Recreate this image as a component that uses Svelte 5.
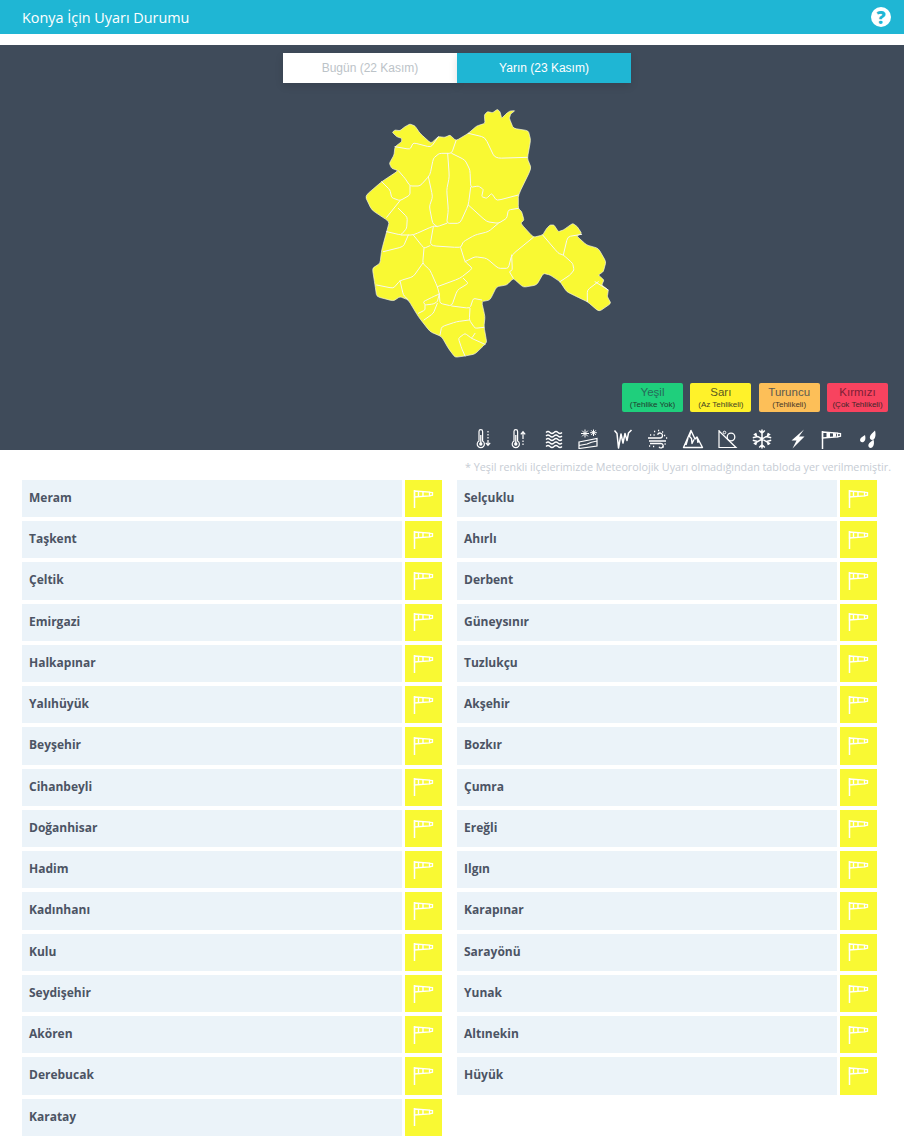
<script>
  const left = ["Meram","Taşkent","Çeltik","Emirgazi","Halkapınar","Yalıhüyük","Beyşehir","Cihanbeyli","Doğanhisar","Hadim","Kadınhanı","Kulu","Seydişehir","Akören","Derebucak","Karatay"]
  const right = ["Selçuklu","Ahırlı","Derbent","Güneysınır","Tuzlukçu","Akşehir","Bozkır","Çumra","Ereğli","Ilgın","Karapınar","Sarayönü","Yunak","Altınekin","Hüyük"]
  const legend = [
    {name: "Yeşil", sub: "(Tehlike Yok)", cls: "green"},
    {name: "Sarı", sub: "(Az Tehlikeli)", cls: "yellow"},
    {name: "Turuncu", sub: "(Tehlikeli)", cls: "orange"},
    {name: "Kırmızı", sub: "(Çok Tehlikeli)", cls: "red"}
  ]

  const outline = "45,288 95,245 145,212 125,205 118,190 132,165 135,140 155,125 155,115 140,110 127,97 135,90 150,92 165,80 180,72 195,78 210,100 243,130 265,110 285,112 300,105 318,122 355,100 380,78 405,70 403,45 412,35 428,38 442,28 450,35 455,55 470,40 480,33 495,32 482,42 478,55 490,85 535,92 542,120 532,175 544,205 505,285 505,325 515,335 522,360 512,370 550,412 578,405 590,385 600,375 612,375 625,395 640,390 668,370 682,380 695,400 680,408 710,435 745,445 768,485 760,515 745,525 762,540 755,555 775,570 772,590 783,610 747,635 712,605 680,590 650,575 630,545 600,525 580,520 560,555 520,562 490,535 470,555 440,560 420,600 395,605 405,650 402,680 410,725 405,733 375,762 345,768 315,772 295,745 275,710 240,695 205,650 175,600 150,590 130,603 80,590 75,555 67,505 90,490 95,450 110,395 118,365 65,330"
  const borders = [
    "135,140 180,148 190,128 243,142 265,110",
    "318,122 305,160 268,160 250,175 240,225 210,258 180,258 165,235 145,212",
    "355,100 405,112 435,175 532,172",
    "305,160 345,180 360,210 362,262 385,258 400,268 395,290 410,295 425,280 440,302 505,285",
    "293,160 298,230 290,270 295,330 290,370 330,370 355,315 362,262",
    "235,230 248,290 238,320 248,370 262,380 290,370",
    "95,245 120,270 125,293 150,302 180,285 180,258",
    "150,302 110,352",
    "145,325 172,352 170,385 153,405 110,395",
    "153,405 190,405 250,378 262,380",
    "355,315 410,365 445,370 470,355 475,330 505,325",
    "445,370 415,395 375,405 340,425 332,443 240,437 250,380",
    "190,405 222,445 240,437",
    "175,405 160,440 100,455",
    "222,445 218,490 240,510 262,560 268,582",
    "332,443 345,485 368,505 330,535 262,560",
    "345,485 375,470 410,475 445,505 475,505 485,465 550,412",
    "485,465 487,510 478,515 490,535",
    "218,490 190,530 150,542 130,565 80,555",
    "150,542 160,585 175,600",
    "268,582 270,610 305,618 322,570 355,550 340,535",
    "268,582 250,590 220,605 225,615 250,612 262,605 268,582",
    "225,615 225,630 205,640",
    "262,610 250,640 222,660",
    "305,618 360,625 370,595 395,600",
    "360,625 358,660 375,685 402,682",
    "358,660 320,665 275,680 270,705",
    "375,700 365,715 345,700 325,715 335,745 345,768",
    "365,715 405,733",
    "578,405 625,460 640,465 668,490 672,510 660,525 630,545",
    "640,465 653,410 695,403",
    "745,545 712,570 712,605",
    "735,545 775,570"
  ]

  // rounds the corners of a point list so the borders don't look like straight cuts
  function rounded(list, closed) {
    const pts = list.split(" ").map((p) => p.split(",").map(Number))
    const n = pts.length
    const mix = (a, b, t) => [a[0] + (b[0] - a[0]) * t, a[1] + (b[1] - a[1]) * t].map((v) => v.toFixed(1)).join(" ")
    let d = closed ? "" : `M${pts[0].join(" ")}`
    for (let i = closed ? 0 : 1; i < (closed ? n : n - 1); i++) {
      const cur = pts[i]
      const prev = pts[(i - 1 + n) % n]
      const next = pts[(i + 1) % n]
      d += `${d ? "L" : "M"}${mix(cur, prev, 0.2)}Q${cur.join(" ")} ${mix(cur, next, 0.2)}`
    }
    return closed ? d + "Z" : d + `L${pts[n - 1].join(" ")}`
  }
</script>

{#snippet sock(solid)}
  <path d="M1.500 2v18" stroke-width="1.500" />
  <path d="M1.500 3l15 1.200v3.600L1.500 9z" stroke-width="1.300" />
  {#if solid}
    <path class="band" d="M5.500 3.400l3.500.300v4.800l-3.500.300zM12 4l3 .200v3.600l-3 .300z" />
  {:else}
    <path d="M5.500 3.300v5.400M10 3.700v4.600" stroke-width="1.400" />
  {/if}
  <path d="M16.500 4.300l3 .300v2.600l-3 .600" stroke-width="1.300" />
{/snippet}

<header class="topbar">
  <h1>Konya İçin Uyarı Durumu</h1>
  <span class="help">?</span>
</header>

<section class="panel">
  <div class="tabs">
    <button class="tab">Bugün (22 Kasım)</button>
    <button class="tab active">Yarın (23 Kasım)</button>
  </div>

  <svg class="map" viewBox="0 0 810 795" width="270" height="265">
    <path d={rounded(outline, true)} fill="#f9f933" stroke="#f6f6e6" stroke-width="2" stroke-linejoin="round" />
    {#each borders as line}
      <path d={rounded(line, false)} fill="none" stroke="#f8f8f0" stroke-width="3" stroke-linecap="round" />
    {/each}
  </svg>

  <div class="legend">
    {#each legend as item}
      <div class="level {item.cls}">
        <span>{item.name}</span>
        <small>{item.sub}</small>
      </div>
    {/each}
  </div>

  <div class="hazards">
    <svg viewBox="0 0 22 20"><path d="M6 2.500a1.800 1.800 0 0 1 3.600 0v9.500a3.600 3.600 0 1 1-3.600 0z" stroke-width="1.200" /><circle class="solid" cx="7.800" cy="15" r="1.700" /><path d="M7.800 6v8" stroke-width="1.300" /><path d="M15 2v1.500M15 5v1.500M15 8v1.500M15 11v5M12.800 13.800l2.200 2.600 2.200-2.600" stroke-width="1.200" /></svg>
    <svg viewBox="0 0 22 20"><path d="M6 2.500a1.800 1.800 0 0 1 3.600 0v9.500a3.600 3.600 0 1 1-3.600 0z" stroke-width="1.200" /><circle class="solid" cx="7.800" cy="15" r="1.700" /><path d="M7.800 6v8" stroke-width="1.300" /><path d="M15 16v-1.500M15 13v-1.500M15 10V3M12.800 5.400L15 2.800l2.200 2.600" stroke-width="1.200" /></svg>
    <svg viewBox="0 0 22 20"><path d="M3 3.500q2-2 4 0t4 0 4 0 4 0M3 7q2-2 4 0t4 0 4 0 4 0M3 10.500q2-2 4 0t4 0 4 0 4 0M3 14q2-2 4 0t4 0 4 0 4 0M3 17.500q2-2 4 0t4 0 4 0 4 0" stroke-width="1.300" /></svg>
    <svg viewBox="0 0 22 20"><path d="M8 .5v8M4 4.500h8M5.200 1.700l5.600 5.600M10.800 1.700L5.200 7.300M16.500 .5v6.500M13.200 3.700h6.600M14.200 1.400l4.600 4.600M18.800 1.400L14.200 6" stroke-width="1" /><path d="M2 13l18-3.500V17L2 19.500zM2 16.500l8-1.500q4-2 10-3" stroke-width="1.200" /></svg>
    <svg viewBox="0 0 22 20"><path d="M2.500 1.500l2.500 3 1.500 14.500L9 5l2 9 2-9.500 2 7 1.500-7.500 3-3" stroke-width="1.500" stroke-linejoin="round" /></svg>
    <svg viewBox="0 0 22 20"><path d="M1 9h12a2.500 2.500 0 1 0-2.400-3.200M2 12h17M3 14.500h11a2.200 2.200 0 1 1-2 3.200" stroke-width="1.300" /><path d="M7 2.500h1.200M11 1.500h1.200M15 3h1.200M3 6h1.200M6.500 6h1.200M17 6.500h1.200M19 9h1.200M17.500 15h1.200M6 17.500h1.200M2 17h1.200M15.500 18h1.200" stroke-width="1.300" /></svg>
    <svg viewBox="0 0 22 20"><path d="M1.500 18.500L9 1.500l4 8.500 2-2 5.500 10.500zM9 1.500L7.500 7.500l2 2 .5 5 2-4M15 8l1 6M6 9l-2 7" stroke-width="1.400" stroke-linejoin="round" /></svg>
    <svg viewBox="0 0 22 20"><path d="M2 1v17.500h17L2 2" stroke-width="1.200" /><circle cx="14" cy="8" r="3.800" stroke-width="1.300" /><circle cx="7.500" cy="3.500" r="1.300" stroke-width="1" /></svg>
    <svg viewBox="0 0 22 20"><path d="M11 .5v19M2.800 5.200l16.400 9.600M19.200 5.200L2.800 14.800M8.200 1.500L11 4.200l2.800-2.700M8.200 18.500l2.800-2.700 2.800 2.700M1.800 8.700l4-1-1.200-3.800M20.200 11.300l-4 1 1.200 3.800M20.200 8.700l-4-1 1.200-3.800M1.800 11.300l4 1-1.200 3.800" stroke-width="1.500" /></svg>
    <svg viewBox="0 0 22 20"><path class="solid" d="M18 .5L5.500 11.500H10.500L6.500 19.500 18.500 7.500H13z" /></svg>
    <svg viewBox="0 0 22 20">{@render sock(true)}</svg>
    <svg viewBox="0 0 22 20"><path class="solid" d="M19 1.500c.9 3.200.8 7.500-1.400 9-1.800 1.300-4.300-.2-3.700-2.700.5-2.300 3.200-4.500 5.100-6.300zM9 6c.8 3 .6 5.800-1.500 7-1.800 1-3.800-.4-3.400-2.500.4-2 3.200-3.300 4.900-4.500zM17.500 10.500c.9 3 .7 6.200-1.400 8-1.800 1.300-4.300-.3-3.700-2.700.5-2.200 3.400-3.800 5.100-5.300z" /></svg>
  </div>
</section>

<p class="note">* Yeşil renkli ilçelerimizde Meteorolojik Uyarı olmadığından tabloda yer verilmemiştir.</p>

<main class="list">
  {#each [left, right] as column}
    <div class="column">
      {#each column as name}
        <div class="row">
          <div class="name">{name}</div>
          <div class="flag">
            <svg viewBox="0 0 22 20" width="22" height="20">{@render sock(false)}</svg>
          </div>
        </div>
      {/each}
    </div>
  {/each}
</main>

<style>
  :global(body) {
    background: #fff;
    overflow: hidden;
  }

  .topbar {
    height: 34px;
    background: #1fb6d4;
    display: flex;
    align-items: center;
    justify-content: space-between;
    padding: 0 13px 0 22px;
    margin-bottom: 11px;
  }
  h1 {
    margin: 0;
    font: 400 14.400px "Open Sans", sans-serif;
    color: #fff;
  }
  .help {
    width: 20px;
    height: 20px;
    border-radius: 50%;
    background: #fff;
    color: #1fb6d4;
    font: 800 18px/20px "Open Sans", sans-serif;
    text-align: center;
  }

  .panel {
    height: 405px;
    background: #3f4b5a;
    padding-top: 8px;
    box-sizing: border-box;
    overflow: hidden;
  }
  .tabs {
    display: flex;
    margin-left: 283px;
  }
  .tab {
    width: 174px;
    height: 30px;
    border: 0;
    padding: 0;
    background: #fff;
    color: #bcc3c8;
    font: 12px "Liberation Sans", sans-serif;
    box-shadow: 0 3px 8px rgba(0, 0, 0, 0.12);
  }
  .tab.active {
    background: #1fb6d4;
    color: #fff;
  }

  .map {
    display: block;
    margin: 17px 0 0 350px;
  }

  .legend {
    display: flex;
    justify-content: flex-end;
    gap: 7.330px;
    margin: 18px 16px 0 0;
  }
  .level {
    width: 61px;
    height: 29px;
    border-radius: 2px;
    display: flex;
    flex-direction: column;
    align-items: center;
    font: 11.500px/14px "Liberation Sans", sans-serif;
    padding-top: 2px;
    box-sizing: border-box;
  }
  .level small {
    font-size: 8px;
    line-height: 11px;
    color: #222;
    opacity: 0.85;
  }
  .green { background: #1fcf7c; color: #276b5a; }
  .yellow { background: #fff22a; color: #5d5a20; }
  .orange { background: #fdbf58; color: #5b5a50; }
  .red { background: #f8435f; color: #7c2036; }

  .hazards {
    display: flex;
    gap: 12.800px;
    margin: 17px 0 0 473px;
  }
  .hazards svg {
    width: 22px;
    height: 20px;
    flex: none;
    fill: none;
    stroke: #fff;
  }
  .hazards .solid,
  .band {
    fill: #fff;
    stroke: none;
  }

  .note {
    margin: 10px 13px 0 0;
    height: 19.900px;
    text-align: right;
    font: 10.770px/13px "Open Sans", sans-serif;
    color: #c6ccd4;
  }

  .list {
    display: flex;
    gap: 15px;
    padding-left: 22px;
  }
  .column {
    width: 420px;
  }
  .row {
    display: flex;
    gap: 3px;
    height: 37.250px;
    margin-bottom: 4px;
  }
  .name {
    width: 380px;
    background: #ebf3f9;
    padding-left: 7px;
    box-sizing: border-box;
    font: 700 12px/36.700px "Open Sans", sans-serif;
    color: #4c5464;
  }
  .flag {
    width: 37px;
    background: #f9f933;
    display: flex;
    align-items: center;
    justify-content: center;
  }
  .flag svg {
    fill: none;
    stroke: #fff;
    margin-top: -2px;
  }
</style>
